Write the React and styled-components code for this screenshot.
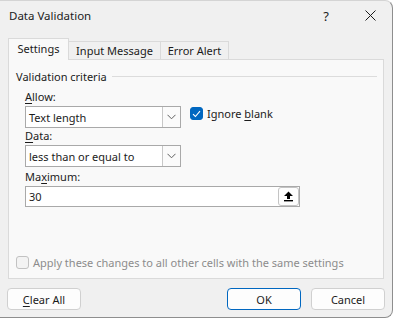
import React from "react"
import styled, { createGlobalStyle } from 'styled-components'

const GlobalStyle = createGlobalStyle`
body {
  margin: 0;
  background: #ffffff;
  font-family: "Noto Sans", "Open Sans", sans-serif;
  font-size: 11px;
  color: #1b1b1b;
}
`;

const Window = styled.div`
display: flex;
flex-direction: column;
box-sizing: border-box;
width: 393px;
height: 318px;
background: #f0f0f0;
border-top: 1px solid #d4d4d4;
border-right: 1px solid #8e8e8e;
border-bottom: 1px solid #8e8e8e;
border-radius: 0 8px 8px 0;
overflow: hidden;
`;

const TitleBar = styled.div`
display: flex;
align-items: center;
height: 29px;
padding-left: 9px;
`;

const Title = styled.div`
flex: 1;
font-size: 11.5px;
`;

const TitleButton = styled.div`
display: flex;
align-items: center;
justify-content: center;
width: 44px;
height: 29px;
font-size: 13px;
`;

const Body = styled.div`
display: flex;
flex-direction: column;
padding: 8px 8px 0 8px;
`;

const TabList = styled.div`
display: flex;
align-items: flex-end;
height: 22px;
position: relative;
z-index: 1;
margin-bottom: -1px;
`;

const Tab = styled.div`
box-sizing: border-box;
display: flex;
align-items: center;
justify-content: center;
height: ${p => (p.$active ? '22px' : '19px')};
width: ${p => p.$w}px;
padding-bottom: ${p => (p.$active ? '2px' : '0')};
background: ${p => (p.$active ? '#f9f9f9' : '#f0f0f0')};
border: 1px solid #dadada;
border-bottom: ${p => (p.$active ? 'none' : '1px solid #dadada')};
margin-left: ${p => (p.$active ? '0' : '-1px')};
`;

const Panel = styled.div`
box-sizing: border-box;
display: flex;
flex-direction: column;
height: 220px;
background: #f9f9f9;
border: 1px solid #dadada;
padding: 0 6px 8px 7px;
`;

const Legend = styled.div`
display: flex;
align-items: center;
gap: 5px;
height: 16px;
margin-top: 8px;
`;

const LegendLine = styled.div`
flex: 1;
height: 1px;
background: #dcdcdc;
`;

const Fields = styled.div`
display: flex;
flex-direction: column;
padding-left: 9px;
`;

const Label = styled.div`
height: 16px;
line-height: 16px;
margin-top: ${p => p.$top || 0}px;
margin-bottom: 1px;
`;

const Row = styled.div`
display: flex;
align-items: flex-start;
gap: 9px;
`;

const Select = styled.div`
box-sizing: border-box;
display: flex;
align-items: center;
width: 156px;
height: 22px;
background: #ffffff;
border: 1px solid #a9a9a9;
padding-left: 3px;
`;

const Value = styled.div`
flex: 1;
white-space: nowrap;
`;

const DropButton = styled.div`
display: flex;
align-items: center;
justify-content: center;
box-sizing: border-box;
width: 18px;
height: 20px;
border-left: 1px solid #c8c8c8;
background: #fbfbfb;
`;

const TextInput = styled.div`
box-sizing: border-box;
display: flex;
align-items: center;
width: 275px;
height: 21px;
background: #ffffff;
border: 1px solid #a9a9a9;
padding-left: 3px;
`;

const CollapseButton = styled.div`
box-sizing: border-box;
display: flex;
align-items: center;
justify-content: center;
width: 21px;
height: 19px;
border: 1px solid #c4c4c4;
border-radius: 3px;
background: #fdfdfd;
`;

const CheckRow = styled.label`
display: flex;
align-items: center;
gap: 4px;
margin-top: ${p => p.$top || 0}px;
color: ${p => (p.$disabled ? '#8c8c8c' : '#1b1b1b')};
`;

const Box = styled.div`
box-sizing: border-box;
display: flex;
align-items: center;
justify-content: center;
width: 13px;
height: 13px;
border-radius: 3px;
background: ${p => (p.$checked ? '#0067c0' : '#f3f3f3')};
border: 1px solid ${p => (p.$checked ? '#0067c0' : '#c2c2c2')};
`;

const Spacer = styled.div`
flex: 1;
`;

const Footer = styled.div`
display: flex;
align-items: center;
gap: 10px;
margin: 9px -1px 0 -1px;
`;

const Button = styled.div`
box-sizing: border-box;
display: flex;
align-items: center;
justify-content: center;
width: 74px;
height: 22px;
background: #fdfdfd;
border: 1px solid ${p => (p.$primary ? '#0067c0' : '#d0d0d0')};
border-radius: 4px;
`;

const U = styled.span`
text-decoration: underline;
text-underline-offset: 2px;
`;

const Chevron = () => (
  <svg width="9" height="6" viewBox="0 0 9 6">
    <path d="M0.5 0.8 L4.5 4.8 L8.5 0.8" fill="none" stroke="#606060" strokeWidth="1" />
  </svg>
);

const Check = () => (
  <svg width="9" height="8" viewBox="0 0 9 8">
    <path d="M1 4.2 L3.4 6.5 L8 1.2" fill="none" stroke="#ffffff" strokeWidth="1.1" />
  </svg>
);

const UpArrow = () => (
  <svg width="11" height="11" viewBox="0 0 11 11">
    <path d="M5.5 0.5 L10 5 L7 5 L7 8 L4 8 L4 5 L1 5 Z" fill="#000" />
    <rect x="1" y="9" width="9" height="1.4" fill="#000" />
  </svg>
);

const Close = () => (
  <svg width="11" height="11" viewBox="0 0 11 11">
    <path d="M0.5 0.5 L10.5 10.5 M10.5 0.5 L0.5 10.5" stroke="#1b1b1b" strokeWidth="1" />
  </svg>
);

const App = () => (
  <>
    <GlobalStyle />
    <Window>
      <TitleBar>
        <Title>Data Validation</Title>
        <TitleButton>?</TitleButton>
        <TitleButton><Close /></TitleButton>
      </TitleBar>
      <Body>
        <TabList>
          <Tab $active $w={61}>Settings</Tab>
          <Tab $w={93}>Input Message</Tab>
          <Tab $w={69}>Error Alert</Tab>
        </TabList>
        <Panel>
          <Legend>Validation criteria<LegendLine /></Legend>
          <Fields>
            <Label $top={5}><U>A</U>llow:</Label>
            <Row>
              <Select>
                <Value>Text length</Value>
                <DropButton><Chevron /></DropButton>
              </Select>
              <CheckRow>
                <Box $checked><Check /></Box>
                <span>Ignore <U>b</U>lank</span>
              </CheckRow>
            </Row>
            <Label><U>D</U>ata:</Label>
            <Select>
              <Value>less than or equal to</Value>
              <DropButton><Chevron /></DropButton>
            </Select>
            <Label $top={2}>Ma<U>x</U>imum:</Label>
            <TextInput>
              <Value>30</Value>
              <CollapseButton><UpArrow /></CollapseButton>
            </TextInput>
          </Fields>
          <Spacer />
          <CheckRow $disabled>
            <Box />
            <span>Apply these changes to all other cells with the same settings</span>
          </CheckRow>
        </Panel>
        <Footer>
          <Button><U>C</U>lear All</Button>
          <Spacer />
          <Button $primary>OK</Button>
          <Button>Cancel</Button>
        </Footer>
      </Body>
    </Window>
  </>
)

export default App;
